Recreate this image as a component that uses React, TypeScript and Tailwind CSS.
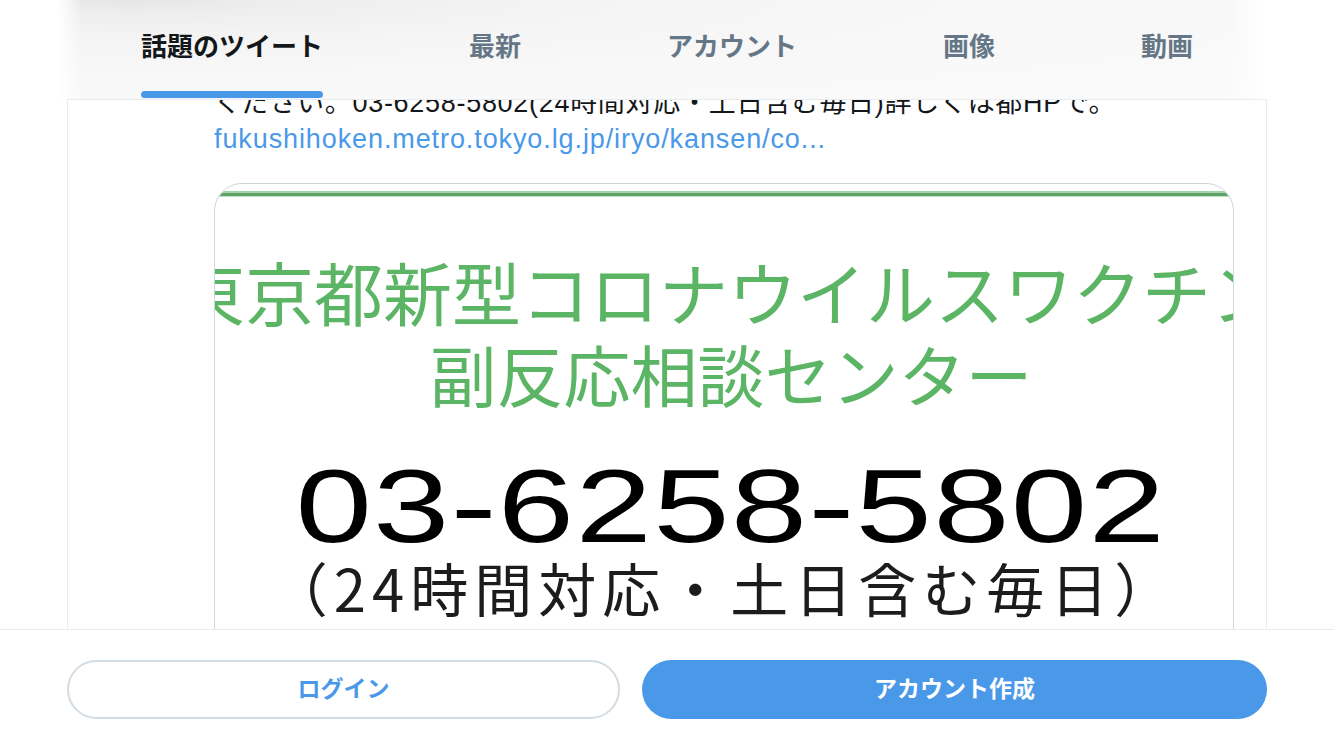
const tabs = ["話題のツイート", "最新", "アカウント", "画像", "動画"];

function SearchTabs() {
  return (
    <header className="ml-[58px] mr-[70px] flex h-[99px] shrink-0 justify-between bg-[linear-gradient(to_right,#fff_0%,transparent_2%,transparent_97%,#fff_100%),radial-gradient(ellipse_at_6%_0%,#e6e6e6_0%,#eeeeee_10%,#f4f4f4_28%,#f8f8f8_55%,#fafafa_100%)] pl-[83px] pr-[71px]">
      {tabs.map((tab, i) => (
        <div key={tab} className="flex flex-col items-stretch pt-[34px]">
          <span
            className={
              i === 0
                ? "text-[26px] leading-[26px] font-bold text-[#14171a]"
                : "text-[26px] leading-[26px] font-bold text-[#657786]"
            }
          >
            {tab}
          </span>
          <div
            className={
              i === 0
                ? "mt-[31px] h-[7px] rounded-full bg-[#4a99e9]"
                : "mt-[31px] h-[7px]"
            }
          />
        </div>
      ))}
    </header>
  );
}

function MediaCard() {
  return (
    <div className="mt-[26px] h-[620px] shrink-0 overflow-hidden rounded-[28px] border border-[#ccd6dd] bg-white font-['Noto_Sans_CJK_JP',sans-serif]">
      <div className="mt-[7px] h-[2px] bg-[#a3d3aa]" />
      <div className="h-[3px] bg-[#5fa36b]" />
      <div className="h-[1px] bg-[#c2e2c6]" />
      <div className="mt-[53px] flex justify-center whitespace-nowrap pl-[8px] text-[69px] leading-[82px] text-[#5bb565]">
        <span>東京都新型コロナウイルスワクチン</span>
      </div>
      <div className="flex justify-center whitespace-nowrap pl-[14px] text-[67px] leading-[82px] text-[#5bb565]">
        <span>副反応相談センター</span>
      </div>
      <div className="mt-[40px] flex justify-center whitespace-nowrap pl-[14px]">
        <span className="inline-block scale-x-[1.32] font-['Liberation_Sans',sans-serif] text-[104px] leading-[104px] tracking-[1px] text-black">
          03-6258-5802
        </span>
      </div>
      <div className="flex justify-center whitespace-nowrap text-[58px] leading-[58px] tracking-[6px] text-[#1c1c1c]">
        <span>（24時間対応・土日含む毎日）</span>
      </div>
    </div>
  );
}

export default function App() {
  return (
    <div className="flex h-[750px] w-[1334px] flex-col overflow-hidden bg-white font-['Liberation_Sans','Noto_Sans_CJK_JP',sans-serif]">
      <SearchTabs />
      <main className="mx-[67px] min-h-0 flex-1 overflow-hidden border-x border-t border-[#e6ecf0] pl-[146px] pr-[32px]">
        <p className="-mt-[14px] whitespace-nowrap text-[27px] leading-[35px] tracking-[0.7px] text-[#14171a]">
          ください。03-6258-5802(24時間対応・土日含む毎日)詳しくは都HPで。
        </p>
        <a className="block whitespace-nowrap pt-[1px] text-[27px] leading-[35px] tracking-[0.9px] text-[#4a99e9]">
          fukushihoken.metro.tokyo.lg.jp/iryo/kansen/co...
        </a>
        <MediaCard />
      </main>
      <footer className="flex h-[121px] shrink-0 gap-[22px] border-t border-[#e6ecf0] px-[67px] pt-[30px]">
        <button className="h-[59px] w-[553px] rounded-full border-2 border-[#d3dce3] text-[23px] font-bold text-[#4a99e9]">
          ログイン
        </button>
        <button className="h-[59px] w-[625px] rounded-full bg-[#4a99e9] text-[23px] font-bold text-white">
          アカウント作成
        </button>
      </footer>
    </div>
  );
}
